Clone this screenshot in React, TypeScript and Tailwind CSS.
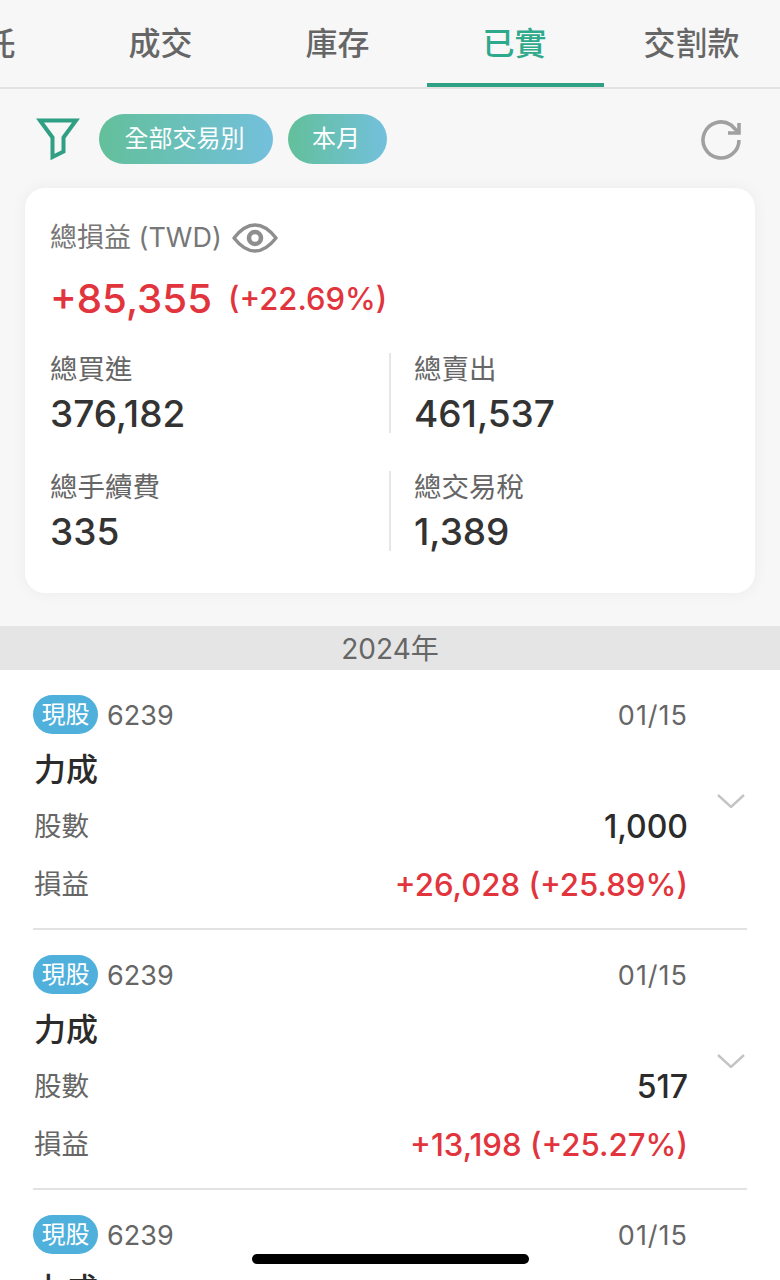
import React from "react";

const FONT = "font-['Inter','Noto_Sans_CJK_TC','Noto_Sans_CJK_SC',sans-serif]";

const tabs = ["委託", "成交", "庫存", "已實", "交割款"];

const trades = [
  { id: 1, shares: "1,000", pnl: "+26,028 (+25.89%)" },
  { id: 2, shares: "517", pnl: "+13,198 (+25.27%)" },
  { id: 3, shares: "1,000", pnl: "+26,028 (+25.89%)" },
];

function FilterIcon() {
  return (
    <svg width="44" height="42" viewBox="0 0 44 42" fill="none" stroke="#2fa084" strokeWidth="4">
      <path d="M4 2.5H40L27.5 19.5V33.5L16.5 39V19.5Z" strokeLinejoin="miter" />
    </svg>
  );
}

function RefreshIcon() {
  return (
    <svg width="42" height="42" viewBox="0 0 42 42" fill="none" stroke="#a0a0a0" strokeWidth="3.6">
      <path d="M39 21A18 18 0 1 1 31 6L39 14" />
      <path d="M39 4V14H28" />
    </svg>
  );
}

function EyeIcon() {
  return (
    <svg width="46" height="30" viewBox="0 0 46 30" fill="none" stroke="#8e8e8e" strokeWidth="3.4">
      <path d="M2 15C9 6 15 2 23 2S37 6 44 15C37 24 31 28 23 28S9 24 2 15Z" strokeLinejoin="round" />
      <circle cx="23" cy="15" r="6" strokeWidth="4.6" />
    </svg>
  );
}

function Stat({ label, value, divided }: { label: string; value: string; divided?: boolean }) {
  return (
    <div className={`h-[80px] ${divided ? "border-l-2 border-[#e6e6e6] pl-[23px]" : ""}`}>
      <div className="text-[27.5px] leading-[32px] text-[#666]">{label}</div>
      <div className="mt-[6px] text-[37px] leading-[46px] font-medium text-[#333]">{value}</div>
    </div>
  );
}

function TradeRow({ shares, pnl }: { shares: string; pnl: string }) {
  return (
    <div className="relative mx-[33px] h-[260px] border-b-2 border-[#e2e2e2] pt-[25px]">
      <div className="flex h-[39px] items-center">
        <span className="flex h-[39px] w-[65px] items-center justify-center rounded-full bg-[#4fb0dc] text-[24px] text-white">現股</span>
        <span className="ml-[9px] pt-[3px] text-[27px] text-[#666]">6239</span>
        <span className="ml-auto mr-[59px] pt-[3px] text-[27px] tracking-[1px] text-[#666]">01/15</span>
      </div>
      <div className="mt-[15px] pl-[1px] text-[32px] leading-[42px] font-medium text-[#2b2b2b]">力成</div>
      <div className="mt-[14px] flex h-[44px] items-center justify-between pl-[1px] pr-[59px]">
        <span className="text-[27.5px] text-[#666]">股數</span>
        <span className="text-[32px] font-medium text-[#2b2b2b]">{shares}</span>
      </div>
      <div className="mt-[14px] flex h-[44px] items-center justify-between pl-[1px] pr-[59px]">
        <span className="text-[27.5px] text-[#666]">損益</span>
        <span className="text-[31.2px] font-medium text-[#e1343c]">{pnl}</span>
      </div>
      <svg className="absolute right-[2px] top-[124px]" width="28" height="14" viewBox="0 0 28 14" fill="none" stroke="#c4c4c4" strokeWidth="2.4">
        <path d="M1 1L14 13L27 1" />
      </svg>
    </div>
  );
}

export default function App() {
  return (
    <div className={`relative h-[1280px] w-[780px] overflow-hidden bg-[#f7f7f7] ${FONT}`}>
      {/* Tabs: the first one runs off the left edge of the scroller */}
      <div className="h-[89px] overflow-hidden border-b-2 border-[#e2e2e2]">
        <div className="ml-[-104px] flex">
          {tabs.map((t, i) => (
            <div
              key={t}
              className={`flex h-[87px] w-[177px] shrink-0 items-center justify-center border-b-4 pr-[2px] pt-[4px] text-[32px] font-medium ${
                i === 3 ? "border-[#2fa084] text-[#2fa98c]" : "border-transparent text-[#666]"
              }`}
            >
              {t}
            </div>
          ))}
        </div>
      </div>

      {/* Filter chips */}
      <div className="flex h-[99px] items-center pl-[36px] pr-[38px]">
        <FilterIcon />
        <span className="ml-[19px] flex h-[50px] w-[174px] items-center justify-center rounded-full bg-gradient-to-r from-[#63bf9a] to-[#73c0dc] pr-[3px] text-[24px] text-white">全部交易別</span>
        <span className="ml-[15px] flex h-[50px] w-[99px] items-center justify-center rounded-full bg-gradient-to-r from-[#63bf9a] to-[#73c0dc] pr-[3px] text-[24px] text-white">本月</span>
        <span className="ml-auto pt-[2px]"><RefreshIcon /></span>
      </div>

      {/* Summary card */}
      <div className="mx-[25px] h-[405px] rounded-[20px] bg-white pl-[25px] pr-[26px] pt-[30px] shadow-[0_0_16px_rgba(0,0,0,0.05)]">
        <div className="flex h-[40px] items-center text-[27px] text-[#777]">
          <span>總損益 (TWD)</span>
          <span className="ml-[10px]"><EyeIcon /></span>
        </div>
        <div className="mt-[19px] flex h-[44px] items-center text-[#e1343c]">
          <span className="text-[40.2px] font-medium">+85,355</span>
          <span className="ml-[16px] text-[31px] font-medium">(+22.69%)</span>
        </div>
        <div className="mt-[32px] grid grid-cols-[339px_1fr] gap-y-[38px]">
          <Stat label="總買進" value="376,182" />
          <Stat label="總賣出" value="461,537" divided />
          <Stat label="總手續費" value="335" />
          <Stat label="總交易稅" value="1,389" divided />
        </div>
      </div>

      {/* Year band */}
      <div className="mt-[33px] flex h-[44px] items-center justify-center bg-[#e5e5e5] pt-[2px] text-[28px] text-[#666]">2024年</div>

      {/* Trades */}
      <div className="bg-white">
        {trades.map((t) => (
          <TradeRow key={t.id} shares={t.shares} pnl={t.pnl} />
        ))}
      </div>

      {/* Home indicator */}
      <div className="absolute bottom-[16px] left-[252px] h-[10px] w-[277px] rounded-full bg-black" />
    </div>
  );
}
